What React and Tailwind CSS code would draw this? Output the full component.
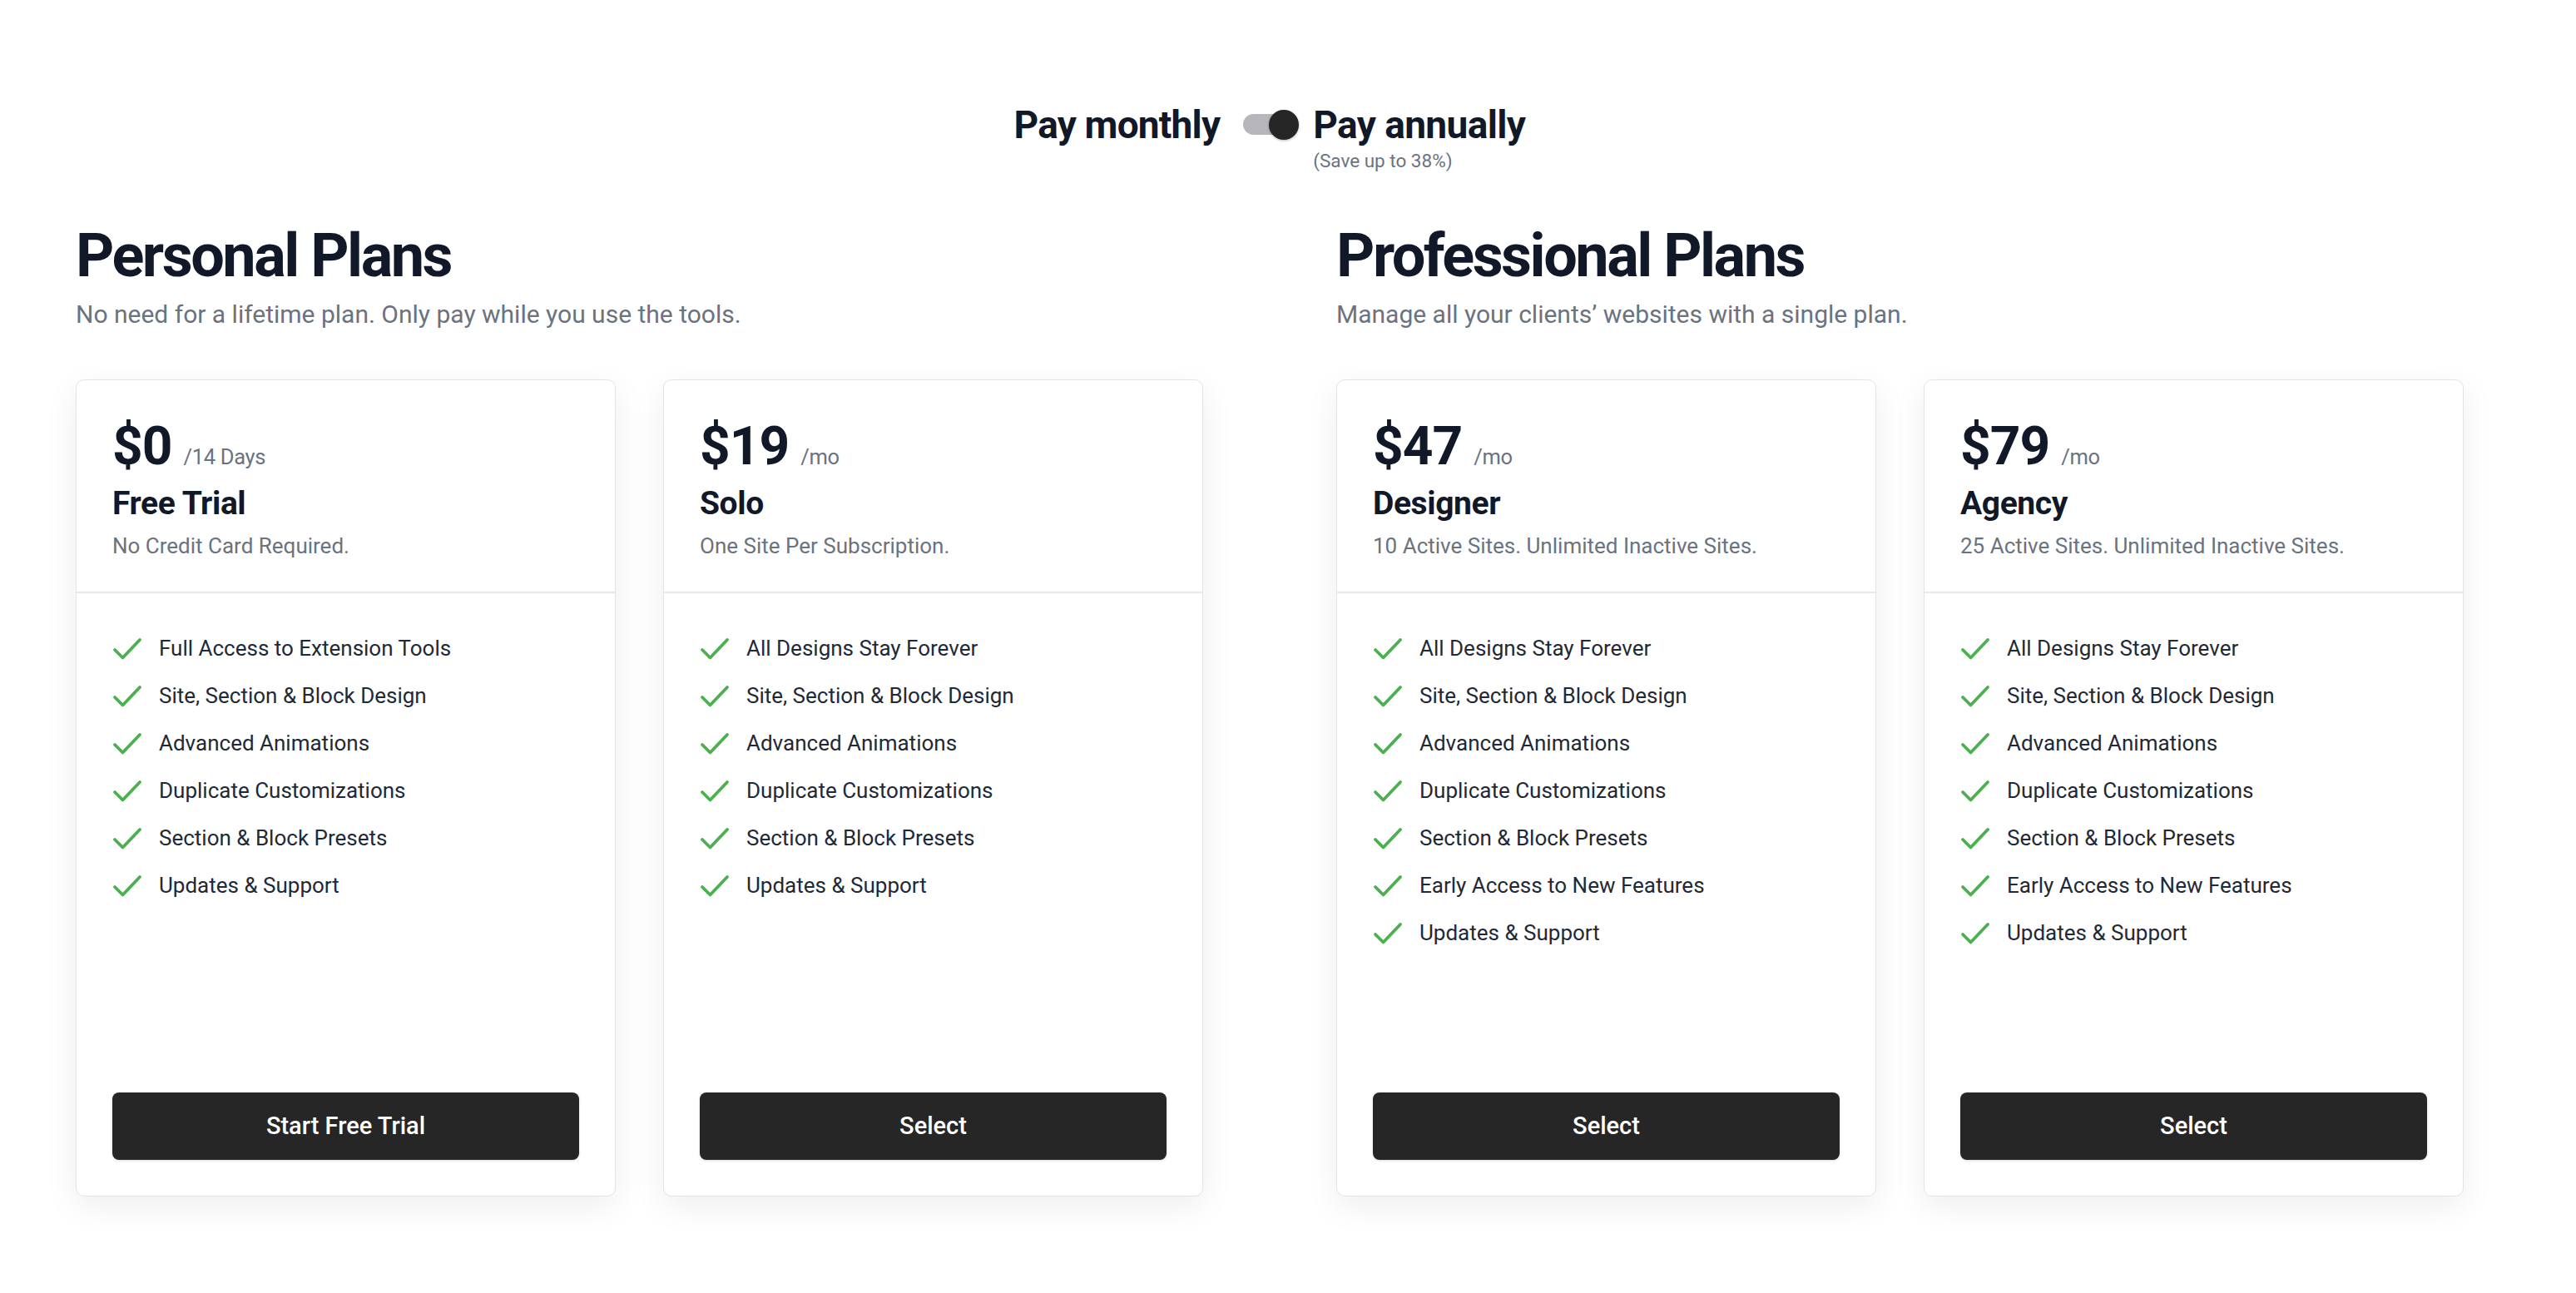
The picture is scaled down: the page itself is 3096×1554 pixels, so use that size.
import React, { useState } from "react";

const personal = [
  {
    price: "$0",
    period: "/14 Days",
    name: "Free Trial",
    note: "No Credit Card Required.",
    cta: "Start Free Trial",
    features: [
      "Full Access to Extension Tools",
      "Site, Section & Block Design",
      "Advanced Animations",
      "Duplicate Customizations",
      "Section & Block Presets",
      "Updates & Support",
    ],
  },
  {
    price: "$19",
    period: "/mo",
    name: "Solo",
    note: "One Site Per Subscription.",
    cta: "Select",
    features: [
      "All Designs Stay Forever",
      "Site, Section & Block Design",
      "Advanced Animations",
      "Duplicate Customizations",
      "Section & Block Presets",
      "Updates & Support",
    ],
  },
];

const proFeatures = [
  "All Designs Stay Forever",
  "Site, Section & Block Design",
  "Advanced Animations",
  "Duplicate Customizations",
  "Section & Block Presets",
  "Early Access to New Features",
  "Updates & Support",
];

const professional = [
  {
    price: "$47",
    period: "/mo",
    name: "Designer",
    note: "10 Active Sites. Unlimited Inactive Sites.",
    cta: "Select",
    features: proFeatures,
  },
  {
    price: "$79",
    period: "/mo",
    name: "Agency",
    note: "25 Active Sites. Unlimited Inactive Sites.",
    cta: "Select",
    features: proFeatures,
  },
];

function Check() {
  return (
    <svg width="36" height="30" viewBox="0 0 36 30" fill="none" className="shrink-0">
      <path d="M3 16 L12.5 25.5 L33 4" stroke="#4caf50" strokeWidth="3.8" strokeLinecap="round" strokeLinejoin="round" />
    </svg>
  );
}

function PlanCard({ plan }) {
  return (
    <div className="flex flex-col min-h-[982px] bg-white border border-[#e4e4e4] rounded-[10px] shadow-[0_12px_40px_rgba(0,0,0,0.07)]">
      <div className="px-[43px] pt-[44px] pb-[38px] border-b-2 border-[#e8e8e8]">
        <div className="flex items-baseline gap-[14px]">
          <span className="text-[64px] leading-[72px] font-bold text-[#111827] tracking-[-1px]">{plan.price}</span>
          <span className="text-[25.5px] text-[#6b7280] tracking-[-0.3px]">{plan.period}</span>
        </div>
        <h3 className="mt-[8px] text-[39px] leading-[48px] font-bold text-[#111827] tracking-[-0.4px]">{plan.name}</h3>
        <p className="mt-[10px] text-[26px] leading-[34px] text-[#6b7280]">{plan.note}</p>
      </div>
      <ul className="px-[43px] pt-[38px]">
        {plan.features.map((f) => (
          <li key={f} className="flex items-center gap-[20px] h-[57px]">
            <Check />
            <span className="text-[26px] text-[#1f2937]">{f}</span>
          </li>
        ))}
      </ul>
      <button className="mt-auto mx-[43px] mb-[43px] h-[81px] rounded-[8px] bg-[#262626] text-white text-[29px] font-medium shadow-[0_1px_3px_rgba(0,0,0,0.15)]">
        {plan.cta}
      </button>
    </div>
  );
}

function Group({ title, subtitle, plans }) {
  return (
    <section>
      <h2 className="text-[72px] leading-[80px] font-bold text-[#111827] tracking-[-2.5px]">{title}</h2>
      <p className="mt-[12px] text-[30px] leading-[36px] text-[#6b7280]">{subtitle}</p>
      <div className="mt-[60px] grid grid-cols-2 gap-[57px]">
        {plans.map((p) => (
          <PlanCard key={p.name} plan={p} />
        ))}
      </div>
    </section>
  );
}

export default function App() {
  const [annual, setAnnual] = useState(true);

  return (
    <div className="min-h-screen bg-white font-['Roboto',sans-serif]">
      <div className="ml-[91px] w-[2870px] pt-[120px]">
        <div className="flex justify-center items-start">
          <span className="text-[46px] leading-[60px] font-bold text-[#111827] tracking-[-0.8px]">Pay monthly</span>
          <button
            onClick={() => setAnnual(!annual)}
            className="relative ml-[28px] mr-[17px] mt-[12px] w-[67px] h-[36px]"
          >
            <span className="absolute left-0 top-[5px] w-[52px] h-[25px] rounded-full bg-[#b6b6bb]" />
            <span
              className={
                annual
                  ? "absolute right-0 top-0 w-[36px] h-[36px] rounded-full bg-[#262626] shadow-[0_1px_3px_rgba(0,0,0,0.3)]"
                  : "absolute left-0 top-0 w-[36px] h-[36px] rounded-full bg-[#262626] shadow-[0_1px_3px_rgba(0,0,0,0.3)]"
              }
            />
          </button>
          <div className="flex flex-col">
            <span className="text-[46px] leading-[60px] font-bold text-[#111827] tracking-[-0.6px]">Pay annually</span>
            <span className="text-[22.5px] leading-[26px] text-[#6b7280]">(Save up to 38%)</span>
          </div>
        </div>

        <div className="mt-[62px] grid grid-cols-2 gap-x-[160px]">
          <Group
            title="Personal Plans"
            subtitle="No need for a lifetime plan. Only pay while you use the tools."
            plans={personal}
          />
          <Group
            title="Professional Plans"
            subtitle="Manage all your clients’ websites with a single plan."
            plans={professional}
          />
        </div>
      </div>
    </div>
  );
}
